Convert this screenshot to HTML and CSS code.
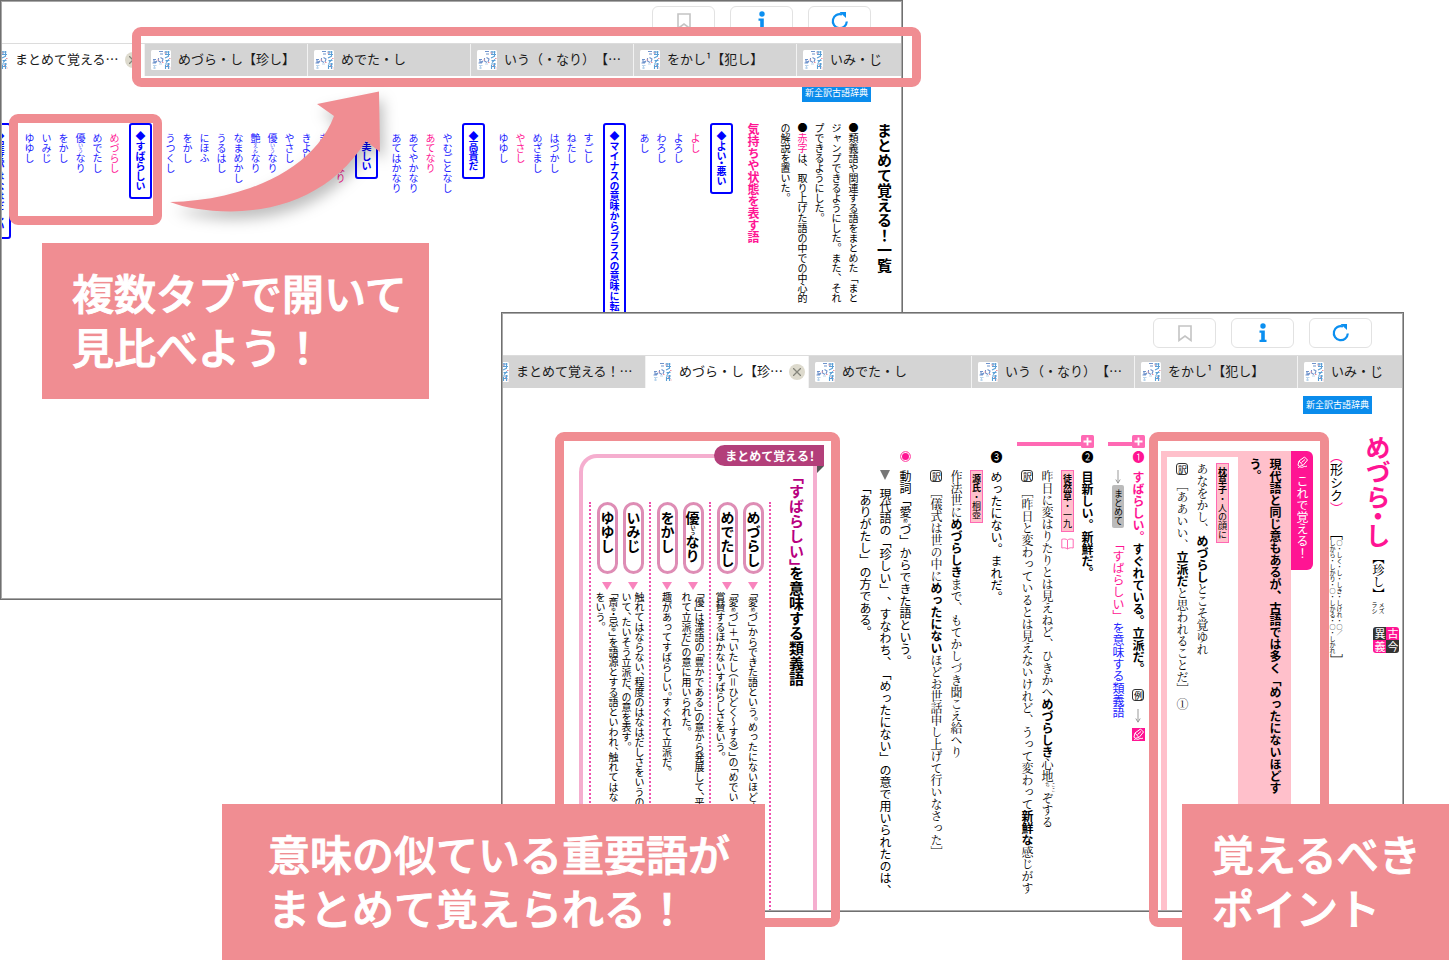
FILE: index.html
```html
<!DOCTYPE html>
<html lang="ja">
<head>
<meta charset="utf-8">
<title>まとめて覚える！</title>
<link rel="stylesheet" href="styles.css">
</head>
<body>
<svg class="defs" aria-hidden="true">
  <symbol id="fav" viewBox="0 0 20 20">
    <rect width="20" height="20" rx="1.500" fill="#fff"/>
    <g fill="none" stroke-width="1.100">
      <path stroke="#5b9fd6" d="M13.500 2h5M14 4.500h5M17.500 1v5M15 1v4M14 8l4-2M14.500 10.500h4M15 12.500l3-3M14 14h5M15 16.500h3.500M17.500 13v6M14.500 15v4"/>
      <path stroke="#6f93cc" d="M8 1.500h4M9 4h3M7.500 8v3l2.500 1.500M9.500 7.500l2.500 1.500-1 3M2 9.500h3M3 9.500v3l3-1.500M1.500 13h3l1.500-2"/>
      <path stroke="#b7d3ec" d="M2 15.500h3.500M2 18h3M8 14h3M3.500 15v4"/>
      <path stroke="#e8909e" d="M13.500 3h1.500M18 8.500h1.500M6.500 10h1.500M11 12.500h1.500M16 15.500h1M18.500 18h1"/>
    </g>
  </symbol>
  <symbol id="mark" viewBox="0 0 14 17"><path d="M1 1h12v14.500l-6-4.500-6 4.500z" fill="none" stroke="#c4c4c4" stroke-width="1.600"/></symbol>
  <symbol id="info" viewBox="0 0 8 20"><circle cx="4" cy="3" r="2.700" fill="#0b8ff0"/><path d="M.5 7.500h5.300v9.300h1.700V19H.5v-2.200h1.700v-7H.5z" fill="#0b8ff0"/></symbol>
  <symbol id="reload" viewBox="0 0 18 18"><path d="M15.800 9.500A7 7 0 1 1 11 2.500" fill="none" stroke="#0b8ff0" stroke-width="2.200"/><path d="M8.500 0h6.500v6z" fill="#0b8ff0"/></symbol>
  <symbol id="plus" viewBox="0 0 13 13"><rect width="13" height="13" rx="1.500" fill="#ff69b4"/><path d="M6.500 2.500v8M2.500 6.500h8" stroke="#fff" stroke-width="1.800"/></symbol>
  <symbol id="pen" viewBox="0 0 13 13"><path d="M2 9l1-4 5.500-4 3 3L7 9.500l-4 .8zM3 5l3.500 4M5.500 6.500L9 3.500M2 12c2-2.500 3 .5 5-1s2 .5 4-1" fill="none" stroke="#fff" stroke-width="1"/></symbol>
  <symbol id="down" viewBox="0 0 6 14"><path d="M3 0v13M.8 9.500L3 13.200l2.200-3.700" fill="none" stroke="#999" stroke-width="1"/></symbol>
  <symbol id="book" viewBox="0 0 13 12"><path d="M6.500 2C5 .8 3 .8.800 1.300V10c2-.4 4-.4 5.700 1 1.700-1.400 3.700-1.400 5.700-1V1.300C10 .8 8 .8 6.500 2zm0 0v9" fill="none" stroke="#ff69b4" stroke-width="1"/></symbol>
</svg>

<main class="stage">
  <section class="window window-list">
    <div class="screen">
      <header class="toolbar">
        <button class="tool" aria-label="しおり"><svg width="14" height="17"><use href="#mark"/></svg></button>
        <button class="tool" aria-label="情報"><svg width="8" height="20"><use href="#info"/></svg></button>
        <button class="tool" aria-label="更新"><svg width="18" height="18"><use href="#reload"/></svg></button>
      </header>
      <nav class="tabs">
        <div class="tab active"><svg class="fav"><use href="#fav"/></svg><span>まとめて覚える…</span><button class="close" aria-label="閉じる"><svg width="8" height="8" viewBox="0 0 8 8"><path d="M0 0l8 8M8 0L0 8" stroke="#85857b" stroke-width="1.300"/></svg></button></div>
        <div class="tab"><svg class="fav"><use href="#fav"/></svg><span>めづら・し【珍し】</span></div>
        <div class="tab"><svg class="fav"><use href="#fav"/></svg><span>めでた・し</span></div>
        <div class="tab"><svg class="fav"><use href="#fav"/></svg><span>いう（・なり）【…</span></div>
        <div class="tab"><svg class="fav"><use href="#fav"/></svg><span>をかし¹【犯し】</span></div>
        <div class="tab"><svg class="fav"><use href="#fav"/></svg><span>いみ・じ</span></div>
      </nav>
      <div class="source"><span>新全訳古語辞典</span></div>
      <div class="page">
        <article class="index">
          <h1>まとめて覚える！一覧</h1>
          <p>●類義語や関連する語をまとめた「まと<br>ジャンプできるようにした。また、それ<br>プできるようにした。<br>●<em>赤字</em>は、取り上げた語の中での中心的<br>の解説を置いた。</p>
          <h2>気持ちや状態を表す語</h2>
          <h3>◆よい<i class="half">・</i>悪い</h3>
          <ul><li class="key">よし</li><li>よろし</li><li>わろし</li><li>あし</li></ul>
          <h3>◆マイナスの意味からプラスの意味に転じた語</h3>
          <ul><li>すごし</li><li>ねたし</li><li>はづかし</li><li>めざまし</li><li class="key">やさし</li><li>ゆゆし</li></ul>
          <h3>◆高貴だ</h3>
          <ul><li>やむごとなし</li><li class="key">あてなり</li><li>あてやかなり</li><li>あてはかなり</li></ul>
          <h3>◆美しい</h3>
          <ul><li class="key">きよらなり</li><li>きよげなり</li><li>きよし</li><li>やさし</li><li>優<small>いう</small>なり</li><li>艶<small>えん</small>なり</li><li>なまめかし</li><li>うるはし</li><li>にほふ</li><li>をかし</li><li>うつくし</li></ul>
          <h3>◆すばらしい</h3>
          <ul><li class="key">めづらし</li><li>めでたし</li><li>優<small>いう</small>なり</li><li>をかし</li><li>いみじ</li><li>ゆゆし</li></ul>
          <h3>◆程度がはなはだしい</h3>
        </article>
      </div>
    </div>
    <div class="ring ring-tabs"></div>
    <div class="ring ring-words"></div>
    <svg class="arrow" width="240" height="140" viewBox="160 85 240 140"><path d="M170 202C240 201 313 172 334 116L317 104 379 91.500 380 152 366 141C335 190 285 211 231 211.500 205 211 185 208 170 202z" fill="#f08d92"/></svg>
  </section>

  <section class="window window-entry">
    <div class="screen">
      <header class="toolbar">
        <button class="tool" aria-label="しおり"><svg width="14" height="17"><use href="#mark"/></svg></button>
        <button class="tool" aria-label="情報"><svg width="8" height="20"><use href="#info"/></svg></button>
        <button class="tool" aria-label="更新"><svg width="18" height="18"><use href="#reload"/></svg></button>
      </header>
      <nav class="tabs">
        <div class="tab"><svg class="fav"><use href="#fav"/></svg><span>まとめて覚える！…</span></div>
        <div class="tab active"><svg class="fav"><use href="#fav"/></svg><span>めづら・し【珍…</span><button class="close" aria-label="閉じる"><svg width="8" height="8" viewBox="0 0 8 8"><path d="M0 0l8 8M8 0L0 8" stroke="#85857b" stroke-width="1.300"/></svg></button></div>
        <div class="tab"><svg class="fav"><use href="#fav"/></svg><span>めでた・し</span></div>
        <div class="tab"><svg class="fav"><use href="#fav"/></svg><span>いう（・なり）【…</span></div>
        <div class="tab"><svg class="fav"><use href="#fav"/></svg><span>をかし¹【犯し】</span></div>
        <div class="tab"><svg class="fav"><use href="#fav"/></svg><span>いみ・じ</span></div>
      </nav>
      <div class="source"><span>新全訳古語辞典</span></div>
      <div class="page">
        <article class="entry">
          <h1><b>めづら<i class="half">・</i>し</b><span class="kanji">【珍し】</span><span class="kana">メズ<br>ラシ</span><span class="kokon"><span>古</span><span>今</span><span>異</span><span>義</span></span></h1>
          <p class="grammar"><em>（</em>形シク<em>）</em><span class="conj"><b>［</b><span>○・しく・し・しき・しけれ・○／<br>しから・しかり・○・しかる・○・しかれ</span><b>］</b></span></p>
          <section class="point">
            <h2><svg width="13" height="13"><use href="#pen"/></svg>これで覚える！</h2>
            <p class="lead">現代語と同じ意もあるが、古語では多く「めったにないほどす<br>う。</p>
            <div class="example">
              <p><span class="cite"><b>枕草子</b>・人の顔に</span></p>
              <p>あなをかし、<b>めづらし</b>とこそ覚ゆれ</p>
              <p><span class="boxed">訳</span>［ああいい、<b>立派だ</b>と思われることだ］ ①</p>
            </div>
          </section>
          <section class="sense marked first">
            <p class="head"><svg class="plus" width="13" height="13"><use href="#plus"/></svg><em class="num">❶</em><b><em>すばらしい。</em>すぐれている。立派だ。</b><span class="boxed rei">例</span><svg class="down" width="6" height="14"><use href="#down"/></svg><svg class="penbox" width="13" height="13"><use href="#pen"/></svg></p>
            <p class="see"><svg width="6" height="14"><use href="#down"/></svg><span class="chip">まとめて</span><a href="#matome"><em>「すばらしい」</em>を意味する類義語</a></p>
          </section>
          <section class="sense marked">
            <p class="head"><svg class="plus" width="13" height="13"><use href="#plus"/></svg><span class="num">❷</span><b>目新しい。新鮮だ。</b></p>
            <p class="src"><span class="cite"><b>徒然草</b>・一九</span><svg class="book" width="13" height="12"><use href="#book"/></svg></p>
            <p class="quote">昨日に変はりたりとは見えねど、ひきかへ<b>めづらしき</b>心地<span class="yomi">ここ<br>ち</span>ぞする</p>
            <p class="quote"><span class="boxed">訳</span>［昨日と変わっているとは見えないけれど、うって変わって<b>新鮮な</b>感じがす</p>
          </section>
          <section class="sense">
            <p class="head"><span class="num">❸</span>めったにない。まれだ。</p>
            <p class="src"><span class="cite"><b>源氏</b>・桐壺</span></p>
            <p class="quote">作法世に<b>めづらしき</b>まで、もてかしづき聞こえ給へり</p>
            <p class="quote"><span class="boxed">訳</span>［儀式は世の中に<b>めったにない</b>ほどお世話申し上げて行いなさった］</p>
          </section>
          <section class="sense">
            <p class="head"><span class="dot"></span>動詞「愛<small>め</small>づ」からできた語という。</p>
            <p class="note"><i class="tri"></i>現代語の「珍しい」、すなわち、「めったにない」の意で用いられたのは、<br>　「ありがたし」の方である。</p>
          </section>
          <section class="matome" id="matome">
            <h2>まとめて覚える！</h2>
            <div class="frame">
              <h3><em>「すばらしい」</em>を意味する類義語</h3>
              <div class="groups">
                <div class="group">
                  <div class="word"><b>めづらし</b><p>「愛<small>め</small>づ」からできた語という。めったにないほどす</p></div>
                  <div class="word"><b>めでたし</b><p>「愛<small>め</small>づ」＋「いたし（＝ひどく〜する）」の「めでい<br>賞賛するほかないすばらしさをいう。</p></div>
                </div>
                <div class="group">
                  <div class="word"><b>優<small>いう</small>なり</b><p>「優」は漢語の「豊かである」の意から発展して、平<br>れて立派だ」の意に用いられた。</p></div>
                  <div class="word"><b>をかし</b><p>趣があってすばらしい。すぐれて立派だ。</p></div>
                </div>
                <div class="group">
                  <div class="word"><b>いみじ</b><p>触れてはならない、程度のはなはだしさをいうの<br>いて、たいそう立派だ、の意を表す。</p></div>
                  <div class="word"><b>ゆゆし</b><p>「斎<small>ゆ</small>・忌<small>ゆ</small>」を語源とする語といわれ、触れてはな<br>をいう。</p></div>
                </div>
              </div>
            </div>
          </section>
        </article>
      </div>
    </div>
    <div class="ring ring-matome"></div>
    <div class="ring ring-point"></div>
  </section>

  <p class="callout callout-tabs">複数タブで開いて<br>見比べよう！</p>
  <p class="callout callout-matome">意味の似ている重要語が<br>まとめて覚えられる！</p>
  <p class="callout callout-point">覚えるべき<br>ポイント</p>
</main>
</body>
</html>
```

FILE: styles.css
```css
* { box-sizing: border-box; margin: 0; padding: 0; }
body {
  background: #fff;
  color: #000;
  font-family: "Noto Sans CJK JP", "Noto Sans", sans-serif;
  font-size: 12px;
  text-spacing-trim: space-all;
}
em, i { font-style: normal; }
ul { list-style: none; }
a { text-decoration: none; }
.defs { display: none; }

.stage { position: relative; min-height: 960px; overflow: hidden; }

/* windows */
.window { position: absolute; width: 62.32%; height: 600px; }
.window-list { left: 0; top: 0; }
.window-entry { right: 45px; top: 312px; }
.screen {
  display: flex;
  flex-direction: column;
  height: 100%;
  border: 1px solid #707070;
  outline: 1px solid #a8a8a8;
  outline-offset: -2px;
  background: #fff;
  overflow: hidden;
}
.toolbar { display: flex; justify-content: flex-end; gap: 15px; height: 42px; padding: 5px 31px 0 0; flex: none; }
.tool {
  display: flex;
  align-items: center;
  justify-content: center;
  width: 63px;
  height: 30px;
  border: 1px solid #e2e2e2;
  border-radius: 6px;
  background: #fff;
}
.tabs { display: flex; flex: none; height: 33px; margin-left: -20px; border-top: 1px solid #dcdcdc; }
.tab {
  display: flex;
  flex: none;
  align-items: center;
  width: 163px;
  padding-left: 6px;
  border-left: 1px solid #f2f2f2;
  background: #d4d4d4;
  font-size: 13px;
  white-space: nowrap;
}
.tab.active { background: #fff; }
.tab span { flex: 1; padding: 0 0 3px 7px; color: #1a1a1a; }
.fav { width: 20px; height: 20px; flex: none; }
.close {
  display: flex;
  align-items: center;
  justify-content: center;
  width: 16px;
  height: 16px;
  margin-right: 3px;
  border: 0;
  border-radius: 50%;
  background: #dddacd;
}
.source { display: flex; justify-content: flex-end; flex: none; padding: 8px 31px 0 0; }
.source span { height: 18px; padding: 0 3px; background: #0a8cec; color: #fff; font-size: 9px; line-height: 18px; }
.page { display: flex; justify-content: flex-end; flex: 1; min-height: 0; padding-top: 21px; }

/* vertical text */
.index, .entry { flex: none; height: 100%; writing-mode: vertical-rl; white-space: nowrap; }
.half { font-feature-settings: "vhal"; }

.index { padding-right: 6px; font-size: 10px; line-height: 17px; }
.index h1 { font-size: 15px; line-height: 24px; margin-left: 10px; }
.index p em, .index .key { color: #ff1493; }
.index h2 { margin: 0 15px 0 12px; color: #ff1493; font-size: 12px; line-height: 17px; }
.index h3 {
  width: 23px;
  height: max-content;
  padding: 6px 2px;
  border: 2px solid #00f;
  border-radius: 3px;
  color: #00f;
  font-size: 10px;
  line-height: 15px;
}
.index ul { margin: 0 6px 0 10px; padding-top: 10px; color: #22f; }
small { font-size: 5px; }

.entry { padding-right: 10px; line-height: 20px; }
.entry em { color: #ff1493; }
.entry h1 { display: flex; align-items: center; line-height: 30px; font-size: 12px; font-weight: 400; }
.entry h1 b { color: #ff1493; font-size: 25px; font-weight: 700; }
.kanji { margin-top: 4px; font-family: "Noto Serif CJK JP", "Noto Sans CJK JP", serif; font-weight: 500; }
.kana { margin-top: 2px; font-size: 6px; line-height: 7px; }
.kokon {
  display: grid;
  align-self: flex-start;
  grid-template-columns: 13px 13px;
  grid-template-rows: 13px 13px;
  margin: 13px -6px 0 0;
  color: #fff;
  font-size: 11px;
  line-height: 13px;
  text-align: center;
}
.kokon span { background: #333; }
.kokon span:nth-child(1), .kokon span:nth-child(4) { background: #ff1493; }
.kokon span:nth-child(1) { border-top-right-radius: 3px; }
.kokon span:nth-child(2) { border-bottom-right-radius: 3px; }
.kokon span:nth-child(3) { border-top-left-radius: 3px; }
.kokon span:nth-child(4) { border-bottom-left-radius: 3px; }
.grammar { display: flex; align-items: center; margin: 15px 17px 0 13px; font-size: 13px; }
.conj { display: flex; align-items: center; margin-top: 12px; }
.conj span { font-size: 6px; line-height: 7px; }
.conj b { font-weight: 400; }

.point { display: flex; flex-direction: column; height: 100%; padding-top: 16px; }
.point h2 {
  display: flex;
  align-items: center;
  width: 22px;
  height: 119px;
  padding-top: 5px;
  gap: 6px;
  border-radius: 0 6px 6px 0;
  background: #ff1493;
  color: #fff;
  font-size: 12px;
  font-weight: 400;
}
.lead { padding: 7px 6px 0 7px; background: #ffc0cb; font-weight: 700; }
.example { padding: 6px 6px 0 5px; border-left: 6px solid #ffc0cb; border-top: 6px solid #ffc0cb; }
.example, .quote { font-family: "Noto Serif CJK JP", "Noto Sans CJK JP", serif; }
.example b, .quote b, .cite { font-family: "Noto Sans CJK JP", sans-serif; }
.cite { display: inline-block; padding: 3px 0; border: 1px solid #ff69b4; background: #ffc0cb; font-size: 9px; line-height: 11px; }
.boxed {
  display: inline-block;
  width: 12px;
  height: 12px;
  margin-bottom: 4px;
  border: 1px solid #333;
  border-radius: 3px;
  font-family: "Noto Sans CJK JP", sans-serif;
  font-size: 9px;
  line-height: 10px;
  text-align: center;
}

.sense { margin: 7px 14px 0 0; padding-top: 4px; }
.sense.marked { border-top: 4px solid #ff69b4; padding-top: 0; }
.sense.first { margin-right: 16px; }
.sense p { padding-top: 24px; }
.sense .head { display: flex; align-items: center; padding-top: 5px; margin-left: 3px; line-height: 14px; }
.num, .dot { flex: none; margin-bottom: 8px; }
.dot { width: 11px; height: 11px; border: 1px solid #ff69b4; border-radius: 50%; background: #ff1493; box-shadow: inset 0 0 0 1px #fff; }
.plus { flex: none; margin: -16px 0 3px; }
.rei { margin: 14px 0 8px; }
.penbox { margin-top: 5px; background: #ff1493; }
.sense .see { display: flex; align-items: center; }
.chip { margin: 1px 0 10px; padding: 4px 0 3px; border-radius: 2px; background: #bbb; font-size: 9px; line-height: 12px; }
.see a { color: #22f; }
.book { margin-top: 6px; }
.yomi { display: inline-block; font-size: 5px; line-height: 6px; vertical-align: middle; }
.tri { display: inline-block; margin-bottom: 8px; border: 5px solid transparent; border-top: 10px solid #777; border-bottom: 0; }

/* synonym panel, laid out horizontally */
.matome { width: 245px; height: 100%; margin-right: 31px; padding-top: 10px; display: flex; flex-direction: column; writing-mode: horizontal-tb; }
.matome h2 {
  align-self: flex-end;
  position: relative;
  height: 21px;
  padding: 0 9px 0 11px;
  border-radius: 11px 0 0 11px;
  background: #b33f7a;
  color: #fff;
  font-size: 12px;
  line-height: 21px;
  font-feature-settings: "halt";
}
.matome h2::after { content: ""; position: absolute; right: 0; top: 21px; border-top: 7px solid #555; border-right: 7px solid transparent; }
.frame {
  display: flex;
  flex-direction: row-reverse;
  flex: 1;
  margin: -12px 7px 0 0;
  border: 4px solid #f5aecf;
  border-bottom: 0;
  border-radius: 18px 0 0 0;
}
.frame h3 { margin: 18px 7px 0; font-size: 15px; line-height: 20px; writing-mode: vertical-rl; font-feature-settings: "vhal"; }
.frame h3 em { color: #b8007f; }
.groups { display: flex; flex-direction: row-reverse; margin: 44px 8px 0 0; }
.group { display: flex; flex-direction: row-reverse; width: 60px; padding: 0 3px; border-left: 2px dotted #f04fae; }
.group:first-child { width: 62px; border-right: 2px dotted #f04fae; }
.word { display: flex; flex-direction: column; align-items: center; width: 26px; flex: none; }
.word b {
  width: 21px;
  height: 72px;
  padding-top: 6px;
  border: 3px solid #de8db5;
  border-radius: 11px;
  font-size: 14px;
  line-height: 15px;
  writing-mode: vertical-rl;
}
.word::before { order: 1; content: ""; margin: 8px 0 2px; border: 5px solid transparent; border-top: 8px solid #f884bd; border-bottom: 0; }
.word p { order: 2; font-size: 10px; line-height: 13px; writing-mode: vertical-rl; font-feature-settings: "vhal"; }

/* annotations */
.ring { position: absolute; border: 9px solid #f08d92; border-radius: 9px; }
.ring-tabs { left: 132px; right: -18px; top: 27px; height: 60px; }
.ring-words { right: 741px; top: 114px; width: 153px; height: 111px; }
.ring-matome { right: 564px; top: 120px; width: 285px; height: 495px; }
.ring-point { right: 75px; top: 120px; width: 180px; height: 495px; }
.arrow { position: absolute; right: 503px; top: 85px; overflow: visible; filter: drop-shadow(4px 8px 7px rgba(0, 0, 0, .25)); }
.callout {
  position: absolute;
  min-height: 156px;
  padding: 22px 30px;
  background: #f08d92;
  color: #fff;
  font-size: 42px;
  font-weight: 500;
  line-height: 54px;
  white-space: nowrap;
  -webkit-text-stroke: 1px #fff;
}
.callout-tabs { left: 42px; top: 243px; width: 387px; }
.callout-matome { right: 684px; bottom: 0; width: 543px; padding-left: 46px; }
.callout-point { right: 0; bottom: 0; width: 267px; }
```
